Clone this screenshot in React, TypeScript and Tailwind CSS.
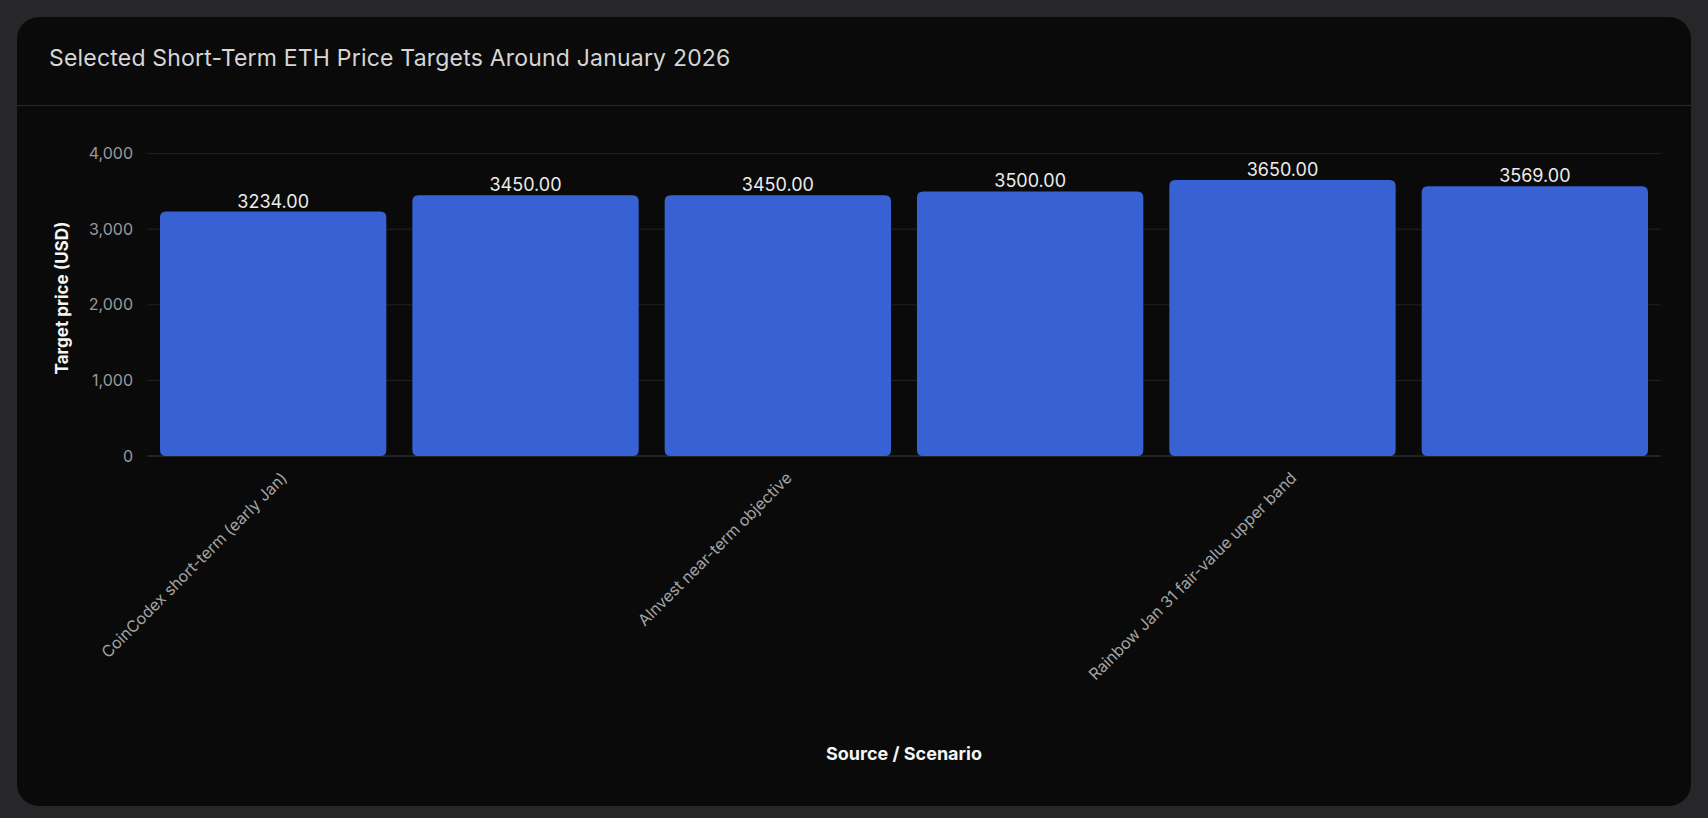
export default function App() {
  const data = [
    { label: "CoinCodex short-term (early Jan)", v: 3234, show: true },
    { label: "", v: 3450, show: false },
    { label: "AInvest near-term objective", v: 3450, show: true },
    { label: "", v: 3500, show: false },
    { label: "Rainbow Jan 31 fair-value upper band", v: 3650, show: true },
    { label: "", v: 3569, show: false },
  ];
  const left = 130, right = 1644, y0 = 350, per = 75.6 / 1000;
  const band = (right - left) / 6;
  const font = { fontFamily: "Inter, 'Liberation Sans', sans-serif" };
  return (
    <div className="min-h-screen w-full bg-[#27272a] p-[17px]" style={font}>
      <div className="flex h-[789px] flex-col overflow-hidden rounded-[22px] bg-[#0a0a0a]">
        <div className="flex h-[89px] items-center border-b border-[#2a2a2a] px-[32px] pb-[6px]">
          <h1 className="text-[23px] font-normal tracking-[0.2px] text-[#d6d6d6]">
            Selected Short-Term ETH Price Targets Around January 2026
          </h1>
        </div>
        <div className="flex-1">
          <svg width="1674" height="700" viewBox="0 0 1674 700" style={font}>
            {[0, 1000, 2000, 3000, 4000].map((t) => {
              const y = y0 - t * per;
              return (
                <g key={t}>
                  <line x1={left} x2={right} y1={y} y2={y} stroke={t === 0 ? "#3a3a3a" : "#222"} strokeWidth={1} />
                  <text x={116} y={y} dy="0.35em" textAnchor="end" fill="#9a9a9a" fontSize={16}>
                    {t.toLocaleString("en-US")}
                  </text>
                </g>
              );
            })}
            {data.map((d, i) => {
              const x = left + i * band + 13;
              const w = band - 26;
              const h = d.v * per;
              const cx = left + i * band + band / 2;
              return (
                <g key={i}>
                  <path
                    d={`M${x},${y0} L${x},${y0 - h + 6} Q${x},${y0 - h} ${x + 6},${y0 - h} L${x + w - 6},${y0 - h} Q${x + w},${y0 - h} ${x + w},${y0 - h + 6} L${x + w},${y0 - 6} Q${x + w},${y0} ${x + w - 6},${y0} L${x + 6},${y0} Q${x},${y0} ${x},${y0 - 6} Z`}
                    fill="#3862d3"
                  />
                  <text x={cx} y={y0 - h - 4} textAnchor="middle" fill="#ececec" fontSize={18}>
                    {d.v.toFixed(2)}
                  </text>
                  {d.show && (
                    <text
                      transform={`translate(${cx + 15},${373}) rotate(-45)`}
                      textAnchor="end"
                      fill="#a3a3a3"
                      fontSize={16}
                    >
                      {d.label}
                    </text>
                  )}
                </g>
              );
            })}
            <text
              transform="translate(45,192) rotate(-90)"
              textAnchor="middle"
              dy="0.35em"
              fill="#f5f5f5"
              fontSize={17}
              fontWeight={700}
            >
              Target price (USD)
            </text>
            <text x={887} y={648} dy="0.35em" textAnchor="middle" fill="#f5f5f5" fontSize={18} fontWeight={700}>
              Source / Scenario
            </text>
          </svg>
        </div>
      </div>
    </div>
  );
}
